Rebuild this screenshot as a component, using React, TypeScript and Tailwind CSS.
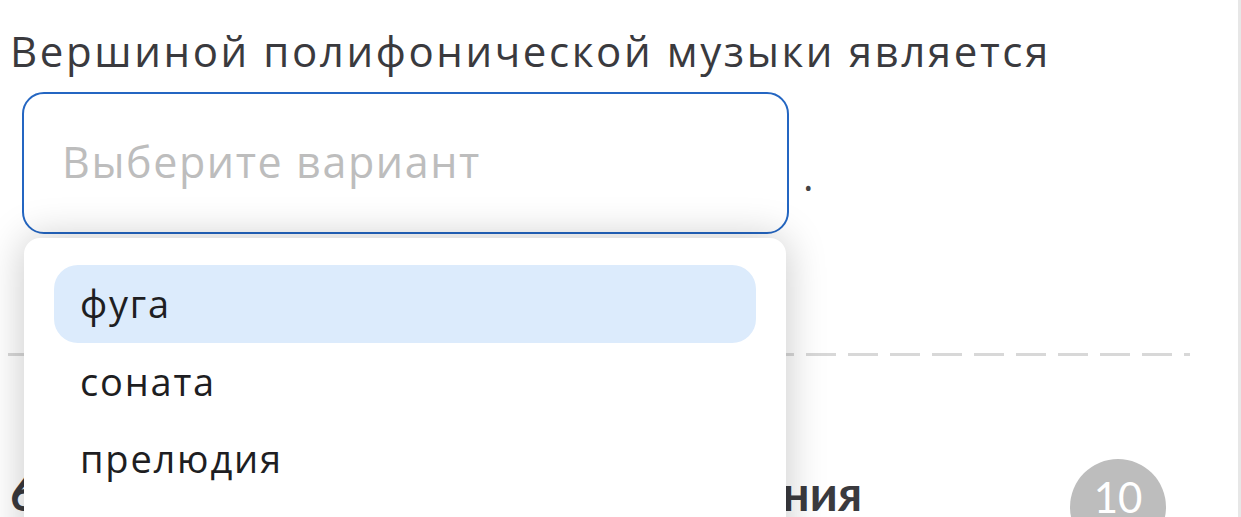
import { useState } from 'react';

const OPTIONS = ['фуга', 'соната', 'прелюдия'];

const App = () => {
    const [active, setActive] = useState(0);

    return (
        <div className="relative h-[517px] w-full overflow-hidden bg-white border-r-[3px] border-[#e7e7e7] font-['Open_Sans',sans-serif]">
            <div className="pl-[10px] pr-[50px]">
                {/* Question with inline select */}
                <h2 className="pt-[22px] text-[42px] leading-[58px] tracking-[2.6px] text-[#3a3a3e]">
                    Вершиной полифонической музыки является
                </h2>

                <div className="relative mt-[12px] flex items-end">
                    <button
                        type="button"
                        className="ml-[12px] flex h-[142px] w-[767px] items-center rounded-[22px] border-2 border-[#2466c2] bg-white pl-[38px] pb-[2px] text-left text-[43px] tracking-[1.6px] text-[#bdbdbd]"
                    >
                        Выберите вариант
                    </button>
                    <span className="ml-[14px] mb-[38px] text-[40px] leading-none text-[#444]">.</span>

                    {/* Options menu */}
                    <div className="absolute left-[14px] top-[146px] z-10 h-[400px] w-[762px] rounded-t-[16px] bg-white px-[30px] pt-[27px] shadow-[0_0_40px_rgba(0,0,0,0.22)]">
                        {OPTIONS.map((opt, i) => (
                            <div
                                key={opt}
                                onMouseEnter={() => setActive(i)}
                                className={`flex h-[77.5px] items-center rounded-[24px] pl-[26px] text-[38px] tracking-[1.8px] text-[#1e1e22] ${i === active ? 'bg-[#dcebfc]' : ''}`}
                            >
                                {opt}
                            </div>
                        ))}
                    </div>
                </div>

                {/* Divider */}
                <div className="mt-[119px] ml-[-2px] h-[3px] w-[1182px] bg-[repeating-linear-gradient(90deg,#d8d8d8_0_30px,transparent_30px_42px)]" />

                {/* Next section header */}
                <div className="mt-[103px] flex items-start justify-between pr-[22px] font-['Lato',sans-serif]">
                    <h3 className="mt-[5px] whitespace-nowrap text-[48px] font-bold leading-[58px] text-[#3a3a3e]">
                        6. Вопросы и задания для повторения
                    </h3>
                    <span className="flex h-[96px] w-[96px] shrink-0 items-start justify-center rounded-full bg-[#bdbdbd] pt-[14px] text-[42px] leading-[48px] text-white">
                        10
                    </span>
                </div>
            </div>
        </div>
    );
};

export default App;
